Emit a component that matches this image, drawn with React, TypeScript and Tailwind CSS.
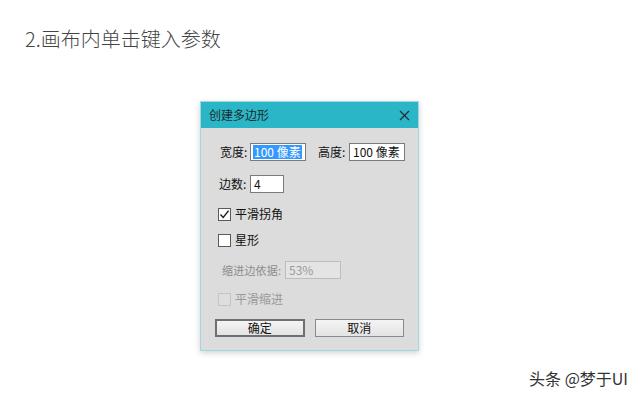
import React from "react";

const font = "font-['Noto_Sans_CJK_SC','Noto_Sans',sans-serif]";

function CheckBox({ checked, disabled }: { checked?: boolean; disabled?: boolean }) {
  return (
    <span
      className={`flex h-[13px] w-[13px] shrink-0 items-center justify-center border ${
        disabled ? "border-[#c4c4c4] bg-[#dedede]" : "border-[#5a5a5a] bg-white"
      }`}
    >
      {checked && (
        <svg width="11" height="11" viewBox="0 0 11 11">
          <path d="M1.5 5.5 L4.2 8.4 L9.6 1.6" fill="none" stroke="#222" strokeWidth="1.5" />
        </svg>
      )}
    </span>
  );
}

function Field({ value, width, selected, disabled }: { value: string; width: string; selected?: boolean; disabled?: boolean }) {
  return (
    <div
      className={`flex h-[18px] shrink-0 items-center whitespace-nowrap border px-[2px] text-[12px] leading-[14px] ${width} ${
        disabled ? "border-[#bdbdbd] bg-[#e4e4e4] text-[#9a9a9a]" : "border-[#7a7a7a] bg-white text-[#111]"
      }`}
    >
      {selected ? <span className="bg-[#3399ff] px-[1px] text-white">{value}</span> : <span className="px-[1px]">{value}</span>}
    </div>
  );
}

function Btn({ label, primary }: { label: string; primary?: boolean }) {
  return (
    <button
      className={`flex h-[18px] w-[90px] items-center justify-center bg-gradient-to-b from-[#f4f4f4] to-[#e3e3e3] text-[12px] leading-none text-[#111] ${
        primary ? "border-2 border-[#6f6f6f]" : "border border-[#8a8a8a]"
      }`}
    >
      {label}
    </button>
  );
}

export default function App() {
  return (
    <div className={`h-[394px] w-[640px] overflow-hidden bg-white ${font}`}>
      <h1 className="pl-[25px] pt-[25px] text-[20px] font-light leading-[28px] text-[#444]">2.画布内单击键入参数</h1>

      <div className="ml-[200px] mt-[48px] w-[219px] border border-[#9fd9df] bg-[#dcdcdc] shadow-[0_2px_6px_rgba(0,0,0,0.18)]">
        <div className="flex h-[26px] items-center justify-between bg-[#2bb6c8] pl-[8px] pr-[8px]">
          <span className="text-[12px] leading-none text-[#1d2a2c]">创建多边形</span>
          <svg width="11" height="11" viewBox="0 0 11 11">
            <path d="M1 1 L10 10 M10 1 L1 10" stroke="#1f2b2d" strokeWidth="1.2" />
          </svg>
        </div>

        <div className="whitespace-nowrap px-[14px] pb-[13px] pt-[15px] text-[12px] leading-[14px] text-[#111]">
          <div className="flex items-center">
            <span className="ml-[5px] w-[30px] shrink-0">宽度:</span>
            <Field value="100 像素" width="w-[56px]" selected />
            <span className="ml-[12px] w-[31px] shrink-0">高度:</span>
            <Field value="100 像素" width="w-[56px]" />
          </div>

          <div className="mt-[14px] flex items-center">
            <span className="ml-[4px] w-[31px] shrink-0">边数:</span>
            <Field value="4" width="w-[34px]" />
          </div>

          <div className="mt-[14px] flex items-center gap-[4px] pl-[3px]">
            <CheckBox checked />
            <span>平滑拐角</span>
          </div>

          <div className="mt-[12px] flex items-center gap-[4px] pl-[3px]">
            <CheckBox />
            <span>星形</span>
          </div>

          <div className="mt-[14px] flex items-center text-[#8c8c8c]">
            <span className="ml-[7px] w-[63px] shrink-0 text-[11px] tracking-[0.2px]">缩进边依据:</span>
            <Field value="53%" width="w-[56px]" disabled />
          </div>

          <div className="mt-[13px] flex items-center gap-[4px] pl-[3px] text-[#9a9a9a]">
            <CheckBox disabled />
            <span>平滑缩进</span>
          </div>

          <div className="mt-[13px] flex gap-[10px]">
            <Btn label="确定" primary />
            <Btn label="取消" />
          </div>
        </div>
      </div>

      <div className="mt-[16px] flex justify-end pr-[12px]">
        <span className="text-[16px] leading-[22px] text-[#333]">头条 @梦于UI</span>
      </div>
    </div>
  );
}
